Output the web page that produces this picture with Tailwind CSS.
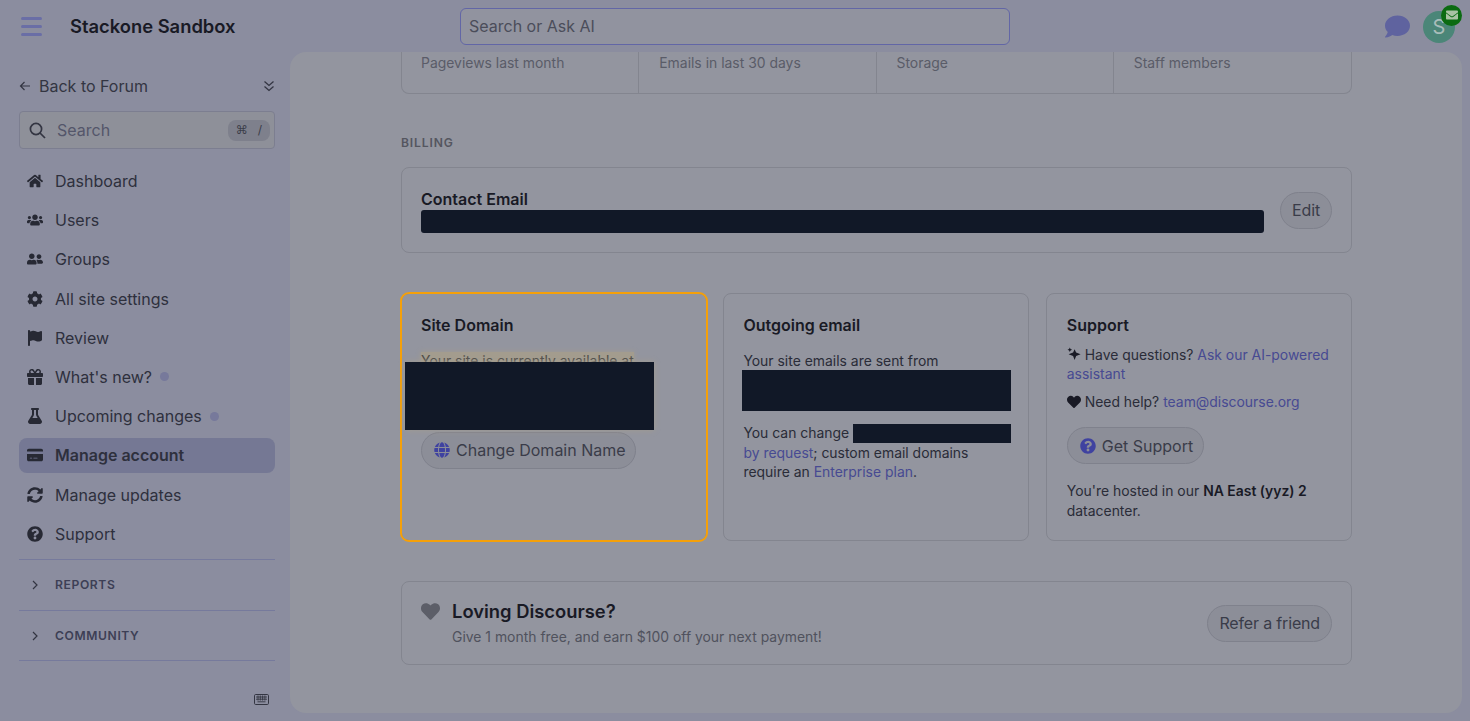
<!DOCTYPE html>
<html lang="en">
<head>
    <meta charset="UTF-8">
    <meta name="viewport" content="width=device-width, initial-scale=1.0">
    <title>Stackone Sandbox - Manage account</title>
    <script src="https://cdn.jsdelivr.net/npm/@tailwindcss/browser@4"></script>
</head>
<body class="w-[1470px] h-[721px] overflow-hidden flex flex-col bg-[#8b8d9f] text-[#2e303d] font-['Inter',sans-serif]">

    <!-- Header -->
    <header class="h-[52px] shrink-0 flex items-center relative">
        <div class="w-[70px] pl-[21px] shrink-0">
            <div class="w-[21px] flex flex-col gap-[5px]">
                <div class="h-[3px] rounded-full bg-[#6a6ea6]"></div>
                <div class="h-[3px] rounded-full bg-[#6a6ea6]"></div>
                <div class="h-[3px] rounded-full bg-[#6a6ea6]"></div>
            </div>
        </div>
        <div class="w-[390px] shrink-0 text-[18.38px] leading-6 font-semibold text-[#191a25]">Stackone Sandbox</div>
        <div class="w-[550px] h-[37px] flex items-center px-2 rounded-md border border-[#6266a6] bg-[#91939f] text-base text-[#4b4d5a]">Search or Ask AI</div>
        <svg class="w-[25px] h-[25px] ml-[375px] mt-[1px] text-[#5f639f]" viewBox="0 0 512 512" fill="currentColor"><path d="M256 32C114.6 32 0 125.1 0 240c0 49.6 21.4 95 57 130.7C44.5 421.1 2.7 466 2.2 466.5c-2.2 2.3-2.8 5.7-1.5 8.7S4.8 480 8 480c66.3 0 116-31.8 140.6-51.4 32.7 12.3 69 19.4 107.4 19.4 141.4 0 256-93.1 256-208S397.4 32 256 32z"/></svg>
        <div class="relative w-8 h-8 ml-[13px] rounded-full bg-[#4b8678] flex items-center justify-center text-[#a9bdba] text-xl mt-[1px]">
            S
            <div class="absolute -top-[6px] -right-[7px] w-[21px] h-[21px] rounded-full bg-[#0b6b12] flex items-center justify-center">
                <svg class="w-3 h-3 text-[#a9c2a4]" viewBox="0 0 512 512" fill="currentColor"><path d="M502.3 190.8c3.9-3.1 9.7-.2 9.7 4.7V400c0 26.5-21.5 48-48 48H48c-26.5 0-48-21.5-48-48V195.6c0-5 5.7-7.8 9.7-4.7 22.4 17.4 52.1 39.5 154.1 113.6 21.1 15.4 56.7 47.8 92.2 47.6 35.7.3 72-32.8 92.3-47.6 102-74.1 131.6-96.3 154-113.7zM256 320c23.2.4 56.6-29.2 73.4-41.4 132.7-96.3 142.8-104.7 173.4-128.7 5.8-4.5 9.2-11.5 9.2-18.9v-19c0-26.5-21.5-48-48-48H48C21.5 64 0 85.5 0 112v19c0 7.4 3.4 14.3 9.2 18.9 30.6 23.9 40.7 32.4 173.4 128.7 16.8 12.2 50.2 41.8 73.4 41.4z"/></svg>
            </div>
        </div>
    </header>

    <div class="flex-1 flex min-h-0">
        <!-- Sidebar -->
        <aside class="w-[290px] shrink-0 pl-[19px] pr-[15px] flex flex-col">
            <div class="h-[24px] mt-[22px] flex items-center justify-between text-base text-[#333542]">
                <div class="flex items-center gap-[8px]">
                    <svg class="w-3 h-3" viewBox="0 0 12 12" fill="none" stroke="currentColor" stroke-width="1.2"><path d="M11 6H1.5M5.5 2 1.5 6l4 4"/></svg>
                    Back to Forum
                </div>
                <svg class="w-3 h-3" viewBox="0 0 12 12" fill="none" stroke="currentColor" stroke-width="1.3"><path d="M1.5 1.5 6 5.5l4.5-4M1.5 6.5 6 10.5l4.5-4"/></svg>
            </div>
            <div class="h-[38px] mt-[13px] flex items-center pl-[9px] pr-[4px] rounded border border-[#7c7e90] bg-[#8e9099] text-base text-[#54566a]">
                <svg class="w-[17px] h-[17px] text-[#333542]" viewBox="0 0 17 17" fill="none" stroke="currentColor" stroke-width="1.7"><circle cx="7" cy="7" r="5.6"/><path d="m11 11 5 5"/></svg>
                <span class="ml-[11px] flex-1">Search</span>
                <span class="w-[42px] h-[21px] rounded-lg bg-[#7e808c] flex items-center justify-center gap-[10px] text-xs text-[#3b3d49]"><span class="font-['DejaVu_Sans',sans-serif]">⌘</span><span>/</span></span>
            </div>

            <nav class="mt-[14.5px] flex flex-col gap-[4.2px] text-base">
                <a class="h-[35px] flex items-center gap-3 pl-2 rounded-lg">
                    <svg class="w-4 h-4 text-[#272934]" viewBox="0 0 576 512" fill="currentColor"><path d="M280.37 148.26L96 300.11V464a16 16 0 0 0 16 16l112.06-.29a16 16 0 0 0 15.92-16V368a16 16 0 0 1 16-16h64a16 16 0 0 1 16 16v95.64a16 16 0 0 0 16 16.05L464 480a16 16 0 0 0 16-16V300L295.67 148.26a12.19 12.19 0 0 0-15.3 0zM571.6 251.47L488 182.56V44.05a12 12 0 0 0-12-12h-56a12 12 0 0 0-12 12v72.61L318.47 43a48 48 0 0 0-61 0L4.34 251.47a12 12 0 0 0-1.6 16.9l25.5 31A12 12 0 0 0 45.15 301l235.22-193.74a12.19 12.19 0 0 1 15.3 0L530.9 301a12 12 0 0 0 16.9-1.6l25.5-31a12 12 0 0 0-1.7-16.93z"/></svg>
                    Dashboard
                </a>
                <a class="h-[35px] flex items-center gap-3 pl-2 rounded-lg">
                    <svg class="w-4 h-4 text-[#272934]" viewBox="0 0 640 512" fill="currentColor"><path d="M96 224c35.3 0 64-28.7 64-64s-28.7-64-64-64-64 28.7-64 64 28.7 64 64 64zm448 0c35.3 0 64-28.7 64-64s-28.7-64-64-64-64 28.7-64 64 28.7 64 64 64zm32 32h-64c-17.6 0-33.5 7.1-45.1 18.6 40.3 22.1 68.9 62 75.1 109.4h66c17.7 0 32-14.3 32-32v-32c0-35.3-28.7-64-64-64zm-256 0c61.9 0 112-50.1 112-112S381.9 32 320 32 208 82.1 208 144s50.1 112 112 112zm76.8 32h-8.3c-20.8 10-43.9 16-68.5 16s-47.6-6-68.5-16h-8.3C179.6 288 128 339.6 128 403.2V432c0 26.5 21.5 48 48 48h288c26.5 0 48-21.5 48-48v-28.8c0-63.6-51.6-115.2-115.2-115.2zm-223.7-13.4C161.5 263.1 145.6 256 128 256H64c-35.3 0-64 28.7-64 64v32c0 17.7 14.3 32 32 32h65.9c6.3-47.4 34.9-87.3 75.2-109.4z"/></svg>
                    Users
                </a>
                <a class="h-[35px] flex items-center gap-3 pl-2 rounded-lg">
                    <svg class="w-4 h-4 text-[#272934]" viewBox="0 0 640 512" fill="currentColor"><path d="M192 256c61.9 0 112-50.1 112-112S253.9 32 192 32 80 82.1 80 144s50.1 112 112 112zm76.8 32h-8.3c-20.8 10-43.9 16-68.5 16s-47.6-6-68.5-16h-8.3C51.6 288 0 339.6 0 403.2V432c0 26.5 21.5 48 48 48h288c26.5 0 48-21.5 48-48v-28.8c0-63.6-51.6-115.2-115.2-115.2zM480 256c53 0 96-43 96-96s-43-96-96-96-96 43-96 96 43 96 96 96zm48 32h-3.8c-13.9 4.8-28.6 8-44.2 8s-30.3-3.2-44.2-8H432c-20.4 0-39.2 5.9-55.7 15.4 24.4 26.3 39.7 61.2 39.7 99.8v38.4c0 2.2-.5 4.3-.6 6.4H592c26.5 0 48-21.5 48-48 0-61.9-50.1-112-112-112z"/></svg>
                    Groups
                </a>
                <a class="h-[35px] flex items-center gap-3 pl-2 rounded-lg">
                    <svg class="w-4 h-4 text-[#272934]" viewBox="0 0 512 512" fill="currentColor"><path d="M487.4 315.7l-42.6-24.6c4.3-23.2 4.3-47 0-70.2l42.6-24.6c4.9-2.8 7.1-8.6 5.5-14-11.1-35.6-30-67.8-54.7-94.6-3.8-4.1-10-5.1-14.8-2.3L380.8 110c-17.9-15.4-38.5-27.3-60.8-35.1V25.8c0-5.6-3.9-10.5-9.4-11.7-36.7-8.2-74.3-7.8-109.2 0-5.5 1.2-9.4 6.1-9.4 11.7V75c-22.2 7.9-42.8 19.8-60.8 35.1L88.7 85.5c-4.9-2.8-11-1.9-14.8 2.3-24.7 26.7-43.6 58.9-54.7 94.6-1.7 5.4.6 11.2 5.5 14L67.3 221c-4.3 23.2-4.3 47 0 70.2l-42.6 24.6c-4.9 2.8-7.1 8.6-5.5 14 11.1 35.6 30 67.8 54.7 94.6 3.8 4.1 10 5.1 14.8 2.3l42.6-24.6c17.9 15.4 38.5 27.3 60.8 35.1v49.2c0 5.6 3.9 10.5 9.4 11.7 36.7 8.2 74.3 7.8 109.2 0 5.5-1.2 9.4-6.1 9.4-11.7v-49.2c22.2-7.9 42.8-19.8 60.8-35.1l42.6 24.6c4.9 2.8 11 1.9 14.8-2.3 24.7-26.7 43.6-58.9 54.7-94.6 1.5-5.5-.7-11.3-5.6-14.1zM256 336c-44.1 0-80-35.9-80-80s35.9-80 80-80 80 35.9 80 80-35.9 80-80 80z"/></svg>
                    All site settings
                </a>
                <a class="h-[35px] flex items-center gap-3 pl-2 rounded-lg">
                    <svg class="w-4 h-4 text-[#272934]" viewBox="0 0 448 512" fill="currentColor"><path d="M64 32C64 14.3 49.7 0 32 0S0 14.3 0 32V64 368 480c0 17.7 14.3 32 32 32s32-14.3 32-32V352l64.3-16.1c41.1-10.3 84.6-5.5 122.5 13.4c44.2 22.1 95.5 24.8 141.7 7.4l34.7-13c12.5-4.7 20.8-16.6 20.8-30V66.1c0-23-24.2-38-44.8-27.7l-9.6 4.8c-46.3 23.2-100.8 23.2-147.1 0c-35.1-17.6-75.4-22-113.5-12.5L64 48V32z"/></svg>
                    Review
                </a>
                <a class="h-[35px] flex items-center gap-3 pl-2 rounded-lg">
                    <svg class="w-4 h-4 text-[#272934]" viewBox="0 0 512 512" fill="currentColor"><path d="M190.5 68.8L225.3 128H224 152c-22.1 0-40-17.9-40-40s17.9-40 40-40h2.2c14.9 0 28.8 7.9 36.3 20.8zM64 88c0 14.4 3.5 28 9.6 40H32c-17.7 0-32 14.3-32 32v64c0 17.7 14.3 32 32 32H480c17.7 0 32-14.3 32-32V160c0-17.7-14.3-32-32-32H438.4c6.1-12 9.6-25.6 9.6-40c0-48.6-39.4-88-88-88h-2.2c-31.9 0-61.5 16.9-77.7 44.4L256 85.5l-24.1-41C215.7 16.9 186.1 0 154.2 0H152C103.4 0 64 39.4 64 88zm336 0c0 22.1-17.9 40-40 40H288h-1.3l34.8-59.2C329.1 55.9 342.9 48 357.8 48H360c22.1 0 40 17.9 40 40zM32 288V464c0 26.5 21.5 48 48 48H224V288H32zM288 512H432c26.5 0 48-21.5 48-48V288H288V512z"/></svg>
                    <span>What's new?</span>
                    <span class="w-[9px] h-[9px] -ml-[4px] rounded-full bg-[#77799b]"></span>
                </a>
                <a class="h-[35px] flex items-center gap-3 pl-2 rounded-lg">
                    <svg class="w-4 h-4 text-[#272934]" viewBox="0 0 448 512" fill="currentColor"><path d="M288 0H160 128C110.3 0 96 14.3 96 32s14.3 32 32 32V196.8c0 11.8-3.3 23.5-9.5 33.5L10.3 406.2C3.6 417.2 0 429.7 0 442.6C0 480.9 31.1 512 69.4 512H378.6c38.3 0 69.4-31.1 69.4-69.4c0-12.8-3.6-25.4-10.3-36.4L329.5 230.4c-6.2-10.1-9.5-21.7-9.5-33.5V64c17.7 0 32-14.3 32-32s-14.3-32-32-32H288zM192 196.8V64h64V196.8c0 23.7 6.6 46.9 19 67.1L309.5 320h-171L173 263.9c12.4-20.2 19-43.4 19-67.1z"/></svg>
                    <span>Upcoming changes</span>
                    <span class="w-[9px] h-[9px] -ml-[4px] rounded-full bg-[#77799b]"></span>
                </a>
                <a class="h-[35px] flex items-center gap-3 pl-2 rounded-lg bg-[#757894] font-semibold">
                    <svg class="w-4 h-4 text-[#272934]" viewBox="0 0 576 512" fill="currentColor"><path d="M64 32C28.7 32 0 60.7 0 96v32H576V96c0-35.3-28.7-64-64-64H64zM576 224H0V416c0 35.3 28.7 64 64 64H512c35.3 0 64-28.7 64-64V224zM112 352h64c8.8 0 16 7.2 16 16s-7.2 16-16 16H112c-8.8 0-16-7.2-16-16s7.2-16 16-16zm112 16c0-8.8 7.2-16 16-16H368c8.8 0 16 7.2 16 16s-7.2 16-16 16H240c-8.8 0-16-7.2-16-16z"/></svg>
                    Manage account
                </a>
                <a class="h-[35px] flex items-center gap-3 pl-2 rounded-lg">
                    <svg class="w-4 h-4 text-[#272934]" viewBox="0 0 512 512" fill="currentColor"><path d="M370.72 133.28C339.458 104.008 298.888 87.962 255.848 88c-77.458.068-144.328 53.178-162.791 126.85-1.344 5.363-6.122 9.15-11.651 9.15H24.103c-7.498 0-13.194-6.807-11.807-14.176C33.933 94.924 134.813 8 256 8c66.448 0 126.791 26.136 171.315 68.685L463.03 40.97C478.149 25.851 504 36.559 504 57.941V192c0 13.255-10.745 24-24 24H345.941c-21.382 0-32.09-25.851-16.971-40.971l41.75-41.749zM32 296h134.059c21.382 0 32.09 25.851 16.971 40.971l-41.75 41.75c31.262 29.273 71.835 45.319 114.876 45.28 77.418-.07 144.315-53.144 162.787-126.849 1.344-5.363 6.122-9.15 11.651-9.15h57.304c7.498 0 13.194 6.807 11.807 14.176C478.067 417.076 377.187 504 256 504c-66.448 0-126.791-26.136-171.315-68.685L48.97 471.03C33.851 486.149 8 475.441 8 454.059V320c0-13.255 10.745-24 24-24z"/></svg>
                    Manage updates
                </a>
                <a class="h-[35px] flex items-center gap-3 pl-2 rounded-lg">
                    <svg class="w-4 h-4 text-[#272934]" viewBox="0 0 512 512" fill="currentColor"><path d="M504 256c0 136.997-111.043 248-248 248S8 392.997 8 256C8 119.083 119.043 8 256 8s248 111.083 248 248zM262.655 90c-54.497 0-89.255 22.957-116.549 63.758-3.536 5.286-2.353 12.415 2.715 16.258l34.699 26.31c5.205 3.947 12.621 3.008 16.665-2.122 17.864-22.658 30.113-35.797 57.303-35.797 20.429 0 45.698 13.148 45.698 32.958 0 14.976-12.363 22.667-32.534 33.976C247.128 238.528 216 254.941 216 296v4c0 6.627 5.373 12 12 12h56c6.627 0 12-5.373 12-12v-1.333c0-28.462 83.186-29.647 83.186-106.667 0-58.002-60.165-102-116.531-102zM256 338c-25.365 0-46 20.635-46 46 0 25.364 20.635 46 46 46s46-20.636 46-46c0-25.365-20.635-46-46-46z"/></svg>
                    Support
                </a>
            </nav>

            <div class="mt-[7.7px] border-t border-[#767a9c] h-[51px] flex items-center gap-[16px] pl-[12px] text-[12.13px] font-semibold tracking-wider text-[#3d3f55]">
                <svg class="w-[8px] h-[10px] text-[#333542]" viewBox="0 0 8 10" fill="none" stroke="currentColor" stroke-width="1.2"><path d="m2 1 4 4-4 4"/></svg>
                REPORTS
            </div>
            <div class="border-t border-[#767a9c] h-[50px] pt-[1px] flex items-center gap-[16px] pl-[12px] text-[12.13px] font-semibold tracking-wider text-[#3d3f55]">
                <svg class="w-[8px] h-[10px] text-[#333542]" viewBox="0 0 8 10" fill="none" stroke="currentColor" stroke-width="1.2"><path d="m2 1 4 4-4 4"/></svg>
                COMMUNITY
            </div>
            <div class="border-t border-[#767a9c] flex justify-end pt-[33px] pr-[6px]">
                <svg class="w-[15px] h-[11px] text-[#333542]" viewBox="0 0 15 11" fill="none" stroke="currentColor"><rect x="0.5" y="0.5" width="14" height="10" rx="1.2"/><path d="M2 3h11M2 5.2h11M3.5 7.8h8M4 1.5v5M6.3 1.5v5M8.6 1.5v5M10.9 1.5v5" stroke-width="0.9"/></svg>
            </div>
        </aside>

        <!-- Main panel -->
        <main class="w-[1172px] h-[661px] rounded-2xl bg-[#93959f] overflow-hidden pl-[111px] pr-[110px]">
            <div class="grid grid-cols-4 h-[42px] border-x border-b border-[#83858f] rounded-b-lg text-[13.93px] text-[#5a5c68]">
                <div class="pl-[19px] pt-[1px] leading-5 border-r border-[#83858f]">Pageviews last month</div>
                <div class="pl-5 pt-[1px] leading-5 border-r border-[#83858f]">Emails in last 30 days</div>
                <div class="pl-5 pt-[1px] leading-5 border-r border-[#83858f]">Storage</div>
                <div class="pl-5 pt-[1px] leading-5">Staff members</div>
            </div>

            <h2 class="mt-[41px] text-[12.13px] leading-4 font-semibold tracking-[0.07em] text-[#55565f]">BILLING</h2>

            <div class="mt-4 h-[86px] border border-[#83858f] rounded-lg flex items-center justify-between px-[19px]">
                <div class="w-[843px] self-start mt-[22px]">
                    <div class="text-base leading-[18px] font-semibold text-[#191a25]">Contact Email</div>
                    <div class="mt-[2px] h-[23px] rounded-[3px] bg-[#111827]"></div>
                </div>
                <button class="h-[37px] px-[11px] rounded-full border border-[#7f818c] bg-[#8c8e98] text-base tracking-[-0.16px] text-[#3a3c49]">Edit</button>
            </div>

            <div class="mt-10 grid grid-cols-[306px_306px_306px] gap-[16.4px] h-[248px] text-[13.93px] leading-[19.4px] text-[#2a2c38]">
                <!-- Site domain -->
                <section class="rounded-lg border border-[#83858f] outline-2 -outline-offset-1 outline-[#f5a009] px-[19px] pt-[19px]">
                    <h3 class="text-base leading-6 font-semibold text-[#191a25]">Site Domain</h3>
                    <div class="relative mt-[15px] h-[80px]">
                        <p class="w-fit bg-[#a39c8e] text-[#4b4a47] shadow-[0_0_5px_#a39c8e]">Your site is currently available at</p>
                        <div class="absolute top-[10px] -left-[16px] w-[249px] h-[68px] bg-[#111827] shadow-[0_0_6px_#a39c8e]"></div>
                    </div>
                    <button class="h-[37px] w-[215px] rounded-full border border-[#7f818c] bg-[#8c8e98] flex items-center gap-[6px] pl-3 pb-[1px] text-base text-[#3a3c49]">
                        <svg class="w-4 h-4 text-[#3f42a0]" viewBox="0 0 496 512" fill="currentColor"><path d="M336.5 160C322 70.7 287.8 8 248 8s-74 62.7-88.5 152h177zM152 256c0 22.2 1.2 43.5 3.3 64h185.3c2.1-20.5 3.3-41.8 3.3-64s-1.2-43.5-3.3-64H155.3c-2.1 20.5-3.3 41.8-3.3 64zm324.7-96c-28.6-67.9-86.5-120.4-158-141.6 24.4 33.8 41.2 84.7 50 141.6h108zM177.2 18.4C105.8 39.6 47.8 92.1 19.3 160h108c8.7-56.9 25.5-107.8 49.9-141.6zM487.4 192H372.7c2.1 21 3.3 42.5 3.3 64s-1.2 43-3.3 64h114.6c5.5-20.5 8.6-41.8 8.6-64s-3.1-43.5-8.5-64zM120 256c0-21.5 1.2-43 3.3-64H8.6C3.2 212.5 0 233.8 0 256s3.2 43.5 8.6 64h114.6c-2-21-3.2-42.5-3.2-64zm39.5 96c14.5 89.3 48.7 152 88.5 152s74-62.7 88.5-152h-177zm159.3 141.6c71.4-21.2 129.4-73.7 158-141.6h-108c-8.8 56.9-25.6 107.8-50 141.6zM19.3 352c28.6 67.9 86.5 120.4 158 141.6-24.4-33.8-41.2-84.7-50-141.6h-108z"/></svg>
                        Change Domain Name
                    </button>
                </section>

                <!-- Outgoing email -->
                <section class="rounded-lg border border-[#83858f] px-[19px] pt-[19px]">
                    <h3 class="text-base leading-6 font-semibold text-[#191a25]">Outgoing email</h3>
                    <p class="mt-[15px] h-[18.4px]">Your site emails are sent from</p>
                    <div class="-ml-[1.5px] w-[269px] h-[41px] bg-[#111827]"></div>
                    <p class="mt-[13px]"><span class="block whitespace-nowrap h-[19.4px]">You can change <span class="inline-block align-top w-[158px] h-[19px] bg-[#111827]"></span></span><a class="text-[#474a92]">by request</a>; custom email domains require an <a class="text-[#474a92]">Enterprise plan</a>.</p>
                </section>

                <!-- Support -->
                <section class="rounded-lg border border-[#83858f] pl-[20px] pr-[18px] pt-[19px]">
                    <h3 class="text-base leading-6 font-semibold text-[#191a25]">Support</h3>
                    <p class="mt-[9px]">
                        <svg class="inline-block w-[14px] h-[14px] align-[-1px] text-[#191a25]" viewBox="0 0 14 14" fill="currentColor"><path d="M7.6 2.2 9.1 5.4 13.6 7.2 9.1 9 7.6 13 6.1 9 1.6 7.2 6.1 5.4ZM2.8.4l.7 1.7 1.6.7-1.6.7-.7 1.6-.7-1.6L.5 2.8l1.6-.7Z"/></svg>
                        Have questions? <a class="text-[#474a92]">Ask our AI-powered assistant</a>
                    </p>
                    <p class="mt-[8px]">
                        <svg class="inline-block w-[14px] h-[14px] align-[-2px] text-[#191a25]" viewBox="0 0 512 512" fill="currentColor"><path d="M462.3 62.6C407.5 15.9 326 24.3 275.7 76.2L256 96.5l-19.7-20.3C186.1 24.3 104.5 15.9 49.7 62.6c-62.8 53.6-66.1 149.8-9.9 207.9l193.5 199.8c12.5 12.9 32.8 12.9 45.3 0l193.5-199.8c56.3-58.1 53-154.3-9.8-207.9z"/></svg>
                        Need help? <a class="text-[#474a92]">team@discourse.org</a>
                    </p>
                    <button class="mt-[15px] h-[37px] w-[137px] rounded-full border border-[#7f818c] bg-[#8c8e98] flex items-center gap-[6px] pl-3 text-base text-[#3a3c49]">
                        <svg class="w-4 h-4 text-[#3f42a0]" viewBox="0 0 512 512" fill="currentColor"><path d="M504 256c0 136.997-111.043 248-248 248S8 392.997 8 256C8 119.083 119.043 8 256 8s248 111.083 248 248zM262.655 90c-54.497 0-89.255 22.957-116.549 63.758-3.536 5.286-2.353 12.415 2.715 16.258l34.699 26.31c5.205 3.947 12.621 3.008 16.665-2.122 17.864-22.658 30.113-35.797 57.303-35.797 20.429 0 45.698 13.148 45.698 32.958 0 14.976-12.363 22.667-32.534 33.976C247.128 238.528 216 254.941 216 296v4c0 6.627 5.373 12 12 12h56c6.627 0 12-5.373 12-12v-1.333c0-28.462 83.186-29.647 83.186-106.667 0-58.002-60.165-102-116.531-102zM256 338c-25.365 0-46 20.635-46 46 0 25.364 20.635 46 46 46s46-20.636 46-46c0-25.365-20.635-46-46-46z"/></svg>
                        Get Support
                    </button>
                    <p class="mt-[18px]">You're hosted in our <strong class="font-semibold text-[#191a25]">NA East (yyz) 2</strong> datacenter.</p>
                </section>
            </div>

            <!-- Referral -->
            <div class="mt-10 h-[84px] border border-[#83858f] rounded-lg flex items-center justify-between px-[19px]">
                <div class="flex items-start gap-[12px] pb-[1px]">
                    <svg class="w-[19px] h-[19px] mt-[3px] text-[#5c5e68]" viewBox="0 0 512 512" fill="currentColor"><path d="M462.3 62.6C407.5 15.9 326 24.3 275.7 76.2L256 96.5l-19.7-20.3C186.1 24.3 104.5 15.9 49.7 62.6c-62.8 53.6-66.1 149.8-9.9 207.9l193.5 199.8c12.5 12.9 32.8 12.9 45.3 0l193.5-199.8c56.3-58.1 53-154.3-9.8-207.9z"/></svg>
                    <div>
                        <div class="text-[18.38px] leading-6 font-semibold text-[#191a25]">Loving Discourse?</div>
                        <div class="mt-[4px] text-[13.93px] leading-5 text-[#50525d]">Give 1 month free, and earn $100 off your next payment!</div>
                    </div>
                </div>
                <button class="h-[37px] px-[11px] rounded-full border border-[#7f818c] bg-[#8c8e98] text-base tracking-[-0.16px] text-[#3a3c49]">Refer a friend</button>
            </div>
        </main>
    </div>
</body>
</html>
